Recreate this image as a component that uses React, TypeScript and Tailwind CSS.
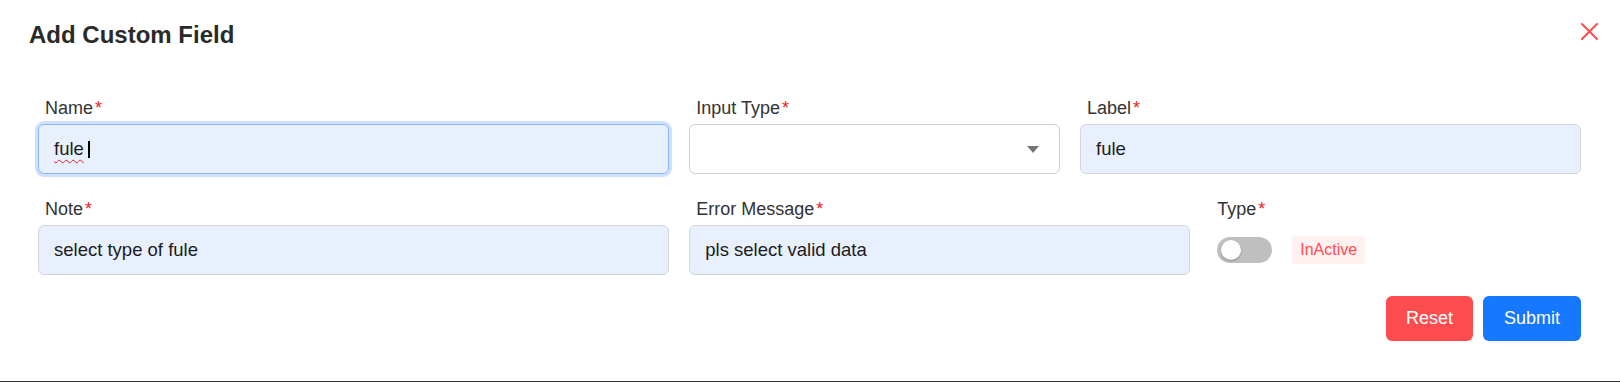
export default function App() {
  const labelCls = "block pl-[7px] text-[18px] leading-[26px] text-[#333] mb-[3px]";
  const inputCls =
    "h-[50px] w-full rounded-[6px] border border-[#d3d6db] bg-[#e8f0fe] px-[15px] flex items-center text-[18.5px] text-[#1c1c1c]";

  const Req = () => <span className="text-[#f21b1b] ml-[2px]">*</span>;

  return (
    <div className="h-[382px] w-full bg-white border-b border-[#333] font-['Liberation_Sans',Arial,sans-serif]">
      {/* Header */}
      <div className="flex items-start justify-between pl-[29px] pr-[22px] pt-[19px]">
        <h2 className="text-[24px] leading-[32px] font-bold text-[#2a2a2a]">Add Custom Field</h2>
        <button className="mt-[4px]">
          <svg width="17" height="17" viewBox="0 0 17 17">
            <path d="M1 1 L16 16 M16 1 L1 16" stroke="#ff4d4f" strokeWidth="2" strokeLinecap="round" />
          </svg>
        </button>
      </div>

      {/* Form */}
      <div className="mt-[44px] pl-[38px] pr-[39px]">
        <div className="grid grid-cols-12 gap-x-5 gap-y-[22px]">
          <div className="col-span-5">
            <label className={labelCls}>
              Name
              <Req />
            </label>
            <div className="h-[50px] w-full rounded-[6px] border border-[#86b7fe] ring-[3px] ring-[#cfe0fb] bg-[#e8f0fe] px-[15px] flex items-center text-[18.5px] text-[#1c1c1c]">
              <span className="underline decoration-wavy decoration-[#e02020] decoration-1 underline-offset-[4px]">fule</span>
              <span className="ml-[4px] inline-block h-[17px] w-[2px] bg-black" />
            </div>
          </div>

          <div className="col-span-3">
            <label className={labelCls}>
              Input Type
              <Req />
            </label>
            <div className="h-[50px] w-full rounded-[6px] border border-[#d0d0d0] bg-white flex items-center justify-end pr-[20px]">
              <svg width="12" height="7" viewBox="0 0 12 7">
                <path d="M0 0 H12 L6 7 Z" fill="#757575" />
              </svg>
            </div>
          </div>

          <div className="col-span-4">
            <label className={labelCls}>
              Label
              <Req />
            </label>
            <div className={inputCls}>fule</div>
          </div>

          <div className="col-span-5">
            <label className={labelCls}>
              Note
              <Req />
            </label>
            <div className={inputCls}>select type of fule</div>
          </div>

          <div className="col-span-4">
            <label className={labelCls}>
              Error Message
              <Req />
            </label>
            <div className={inputCls}>pls select valid data</div>
          </div>

          <div className="col-span-3 pl-[7px]">
            <label className="block text-[18px] leading-[26px] text-[#333] mb-[3px]">
              Type
              <Req />
            </label>
            <div className="h-[50px] flex items-center gap-[20px]">
              <div className="relative h-[26px] w-[55px] rounded-full bg-[#bfbfbf]">
                <span className="absolute left-[4px] top-[3px] h-[20px] w-[20px] rounded-full bg-white shadow-[0_1px_2px_rgba(0,0,0,0.3)]" />
              </div>
              <span className="rounded-[4px] bg-[#fff1f0] px-[8px] h-[28px] flex items-center text-[16px] text-[#ff4d4f]">
                InActive
              </span>
            </div>
          </div>
        </div>

        <div className="mt-[21px] flex justify-end gap-[10px]">
          <button className="h-[45px] rounded-[6px] bg-[#ff4d4f] px-[20px] text-[18px] text-white">Reset</button>
          <button className="h-[45px] rounded-[6px] bg-[#1677ff] px-[21px] text-[18px] text-white">Submit</button>
        </div>
      </div>
    </div>
  );
}
